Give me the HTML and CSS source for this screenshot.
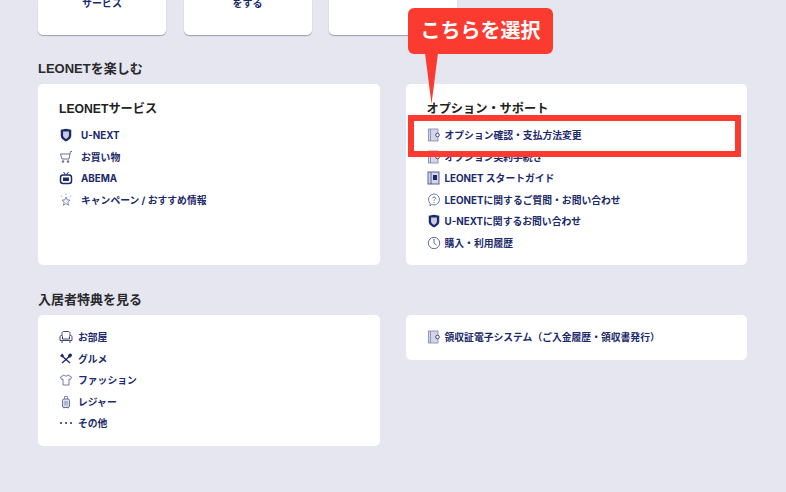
FILE: index.html
```html
<!DOCTYPE html>
<html lang="ja">
<head>
<meta charset="utf-8">
<title>LEONET</title>
<link rel="stylesheet" href="styles.css">
</head>
<body>
<svg class="defs" width="0" height="0" aria-hidden="true">
  <symbol id="i-shield" viewBox="0 0 12 12"><path d="M1.500 1.500 6 .6l4.500.9v5.200C10.500 9 8 10.700 6 11.500 4 10.700 1.500 9 1.500 6.700z" fill="#1b2a6b"/><path d="M3.500 3h5v3.500c0 1.200-1.200 2.200-2.500 2.900-1.300-.7-2.500-1.700-2.500-2.900z" fill="#c9cce0"/></symbol>
  <symbol id="i-book" viewBox="0 0 14 14"><rect x="1.500" y="1" width="9.500" height="12" fill="#d3d6e8" stroke="#7c84ad" stroke-width=".8"/><path d="M3.500 1v12" stroke="#7c84ad" stroke-width=".8"/><circle cx="10.500" cy="7" r="1.800" fill="#fff" stroke="#3d4880"/></symbol>
</svg>

<div class="page">
  <div class="top-row">
    <div class="top-card"><span class="top-label">サービス</span></div>
    <div class="top-card"><span class="top-label">をする</span></div>
    <div class="top-card"></div>
  </div>

  <h2 class="section-title first">LEONETを楽しむ</h2>
  <div class="columns">
    <section class="card tall">
      <h3 class="card-title">LEONETサービス</h3>
      <ul class="links wide">
        <li><svg class="ico"><use href="#i-shield"/></svg>U-NEXT</li>
        <li><svg class="ico" viewBox="0 0 14 14"><path d="M13 1.500h-1.500L10 9H3L1.500 4H11" fill="none" stroke="#67709f"/><circle cx="4" cy="11.500" r="1.200" fill="#67709f"/><circle cx="9" cy="11.500" r="1.200" fill="#67709f"/></svg>お買い物</li>
        <li><svg class="ico" viewBox="0 0 14 14"><rect x="1.500" y="4" width="11" height="8.500" rx="2.500" fill="none" stroke="#1b2a6b" stroke-width="1.500"/><rect x="4" y="6.500" width="6" height="3.500" fill="#1b2a6b"/><path d="M4.500 1l2 2.500M9.500 1l-2 2.500" stroke="#1b2a6b"/></svg>ABEMA</li>
        <li><svg class="ico" viewBox="0 0 14 14"><path d="M7 4l1.200 3H11L8.800 9l.8 3.200L7 10.500l-2.600 1.700.8-3.200L3 7h2.800z" fill="none" stroke="#67709f" stroke-width=".8"/><path d="M7 .5v2M2 2.500l1.200 1.500M12 2.500 10.800 4" stroke="#9aa0c0" stroke-width=".8"/></svg>キャンペーン / おすすめ情報</li>
      </ul>
    </section>
    <section class="card tall">
      <h3 class="card-title">オプション・サポート</h3>
      <ul class="links">
        <li><svg class="ico"><use href="#i-book"/></svg>オプション確認・支払方法変更</li>
        <li><svg class="ico"><use href="#i-book"/></svg>オプション契約手続き</li>
        <li><svg class="ico" viewBox="0 0 14 14"><rect x="1" y="1" width="11" height="12" fill="#d3d6e8" stroke="#56608f"/><path d="M4 1v12" stroke="#56608f"/><rect x="6" y="4" width="4" height="5" fill="#1b2a6b"/></svg>LEONET スタートガイド</li>
        <li><svg class="ico" viewBox="0 0 14 14"><path d="M7 1a5.500 5.500 0 1 1-2.500 10.400L3 13l.2-2.500A5.500 5.500 0 0 1 7 1z" fill="none" stroke="#67709f" stroke-width=".9"/><path d="M5.500 5.200C5.700 3.600 8.500 3.700 8.500 5.300 8.500 6.500 7 6.500 7 7.800M7 9v1" fill="none" stroke="#67709f"/></svg>LEONETに関するご質問・お問い合わせ</li>
        <li><svg class="ico"><use href="#i-shield"/></svg>U-NEXTに関するお問い合わせ</li>
        <li><svg class="ico" viewBox="0 0 14 14"><circle cx="7" cy="7" r="5.700" fill="none" stroke="#67709f"/><path d="M7 3v4.200l2.500 1.800" fill="none" stroke="#67709f"/></svg>購入・利用履歴</li>
      </ul>
    </section>
  </div>

  <h2 class="section-title second">入居者特典を見る</h2>
  <div class="columns">
    <section class="card short">
      <ul class="links">
        <li><svg class="ico" viewBox="0 0 14 14"><path d="M3 6V3.500C3 2 4 1.500 5 1.500h4c1 0 2 .5 2 2V6M1 7c0-2 2.500-2 2.500 0v2h7V7c0-2 2.500-2 2.500 0v3.500H1zM3 10.500V13M11 10.500V13" fill="none" stroke="#3d4880"/></svg>お部屋</li>
        <li><svg class="ico" viewBox="0 0 14 14"><path d="M2 3l9 8M12 3 3 11" stroke="#1b2a6b" stroke-width="1.300"/><ellipse cx="11" cy="3.500" rx="1.700" ry="2.200" fill="#1b2a6b" transform="rotate(45 11 3.500)"/><path d="M1 4l2.500-2.500L5 4 3.500 5.500z" fill="#1b2a6b"/></svg>グルメ</li>
        <li><svg class="ico" viewBox="0 0 14 14"><path d="M5 2 1.500 4 2.500 6.500 4 6v6h6V6l1.500.5 1-2.500L9 2C8.500 3.500 5.500 3.500 5 2z" fill="none" stroke="#67709f" stroke-width=".9"/></svg>ファッション</li>
        <li><svg class="ico" viewBox="0 0 14 14"><rect x="3.500" y="4" width="7" height="8.500" rx="1.500" fill="#dcdfec" stroke="#67709f"/><path d="M5.500 4V1.500h3V4M6 6v4.500M8 6v4.500M5 12.500v1M9 12.500v1" fill="none" stroke="#67709f" stroke-width=".8"/></svg>レジャー</li>
        <li><svg class="ico" viewBox="0 0 14 14"><circle cx="2" cy="7" r="1" fill="#1b2a6b"/><circle cx="7" cy="7" r="1" fill="#1b2a6b"/><circle cx="12" cy="7" r="1" fill="#1b2a6b"/></svg>その他</li>
      </ul>
    </section>
    <section class="card mini">
      <ul class="links">
        <li><svg class="ico"><use href="#i-book"/></svg>領収証電子システム（ご入金履歴・領収書発行）</li>
      </ul>
    </section>
  </div>
</div>

<div class="callout">こちらを選択</div>
<svg class="callout-tail" viewBox="0 0 14 52" width="14" height="52" aria-hidden="true"><path d="M0 0h13L6.500 51z" fill="#fb3b30"/></svg>
<div class="highlight"></div>
</body>
</html>
```
FILE: styles.css
```css
* { box-sizing: border-box; }
html, body { margin: 0; height: 100%; }
body {
  background: #e6e6f0;
  font-family: "Liberation Sans", "Noto Sans CJK JP", sans-serif;
  color: #222;
  position: relative;
  overflow: hidden;
}
.defs { position: absolute; }
.page { padding: 0 39px 0 38px; }
.top-row { display: flex; gap: 17.500px; }
.top-card {
  width: 128px;
  height: 35px;
  background: #fff;
  border-radius: 0 0 5px 5px;
  box-shadow: 0 1px 1px #9c9ca8;
  text-align: center;
}
.top-label {
  display: block;
  padding-top: 0;
  font-size: 10px;
  line-height: 7px;
  font-weight: 700;
  color: #1b2a6b;
}
.section-title {
  margin: 0;
  font-size: 13px;
  line-height: 18px;
  font-weight: 700;
  color: #2a2a2e;
}
.section-title.first { margin-top: 25px; margin-bottom: 6px; }
.section-title.second { margin-top: 26px; margin-bottom: 6px; }
.columns { display: flex; gap: 26px; align-items: flex-start; }
.card {
  flex: 1 1 0;
  background: #fff;
  border-radius: 5px;
  padding: 0 20px 0 21px;
}
.card.tall { height: 181px; padding-top: 16px; }
.card.short { height: 131px; padding-top: 11.500px; }
.card.mini { height: 45px; padding-top: 11.500px; }
.card-title {
  margin: 0 0 6.500px;
  font-size: 12.200px;
  line-height: 18px;
  font-weight: 700;
  color: #222;
}
.links { list-style: none; margin: 0; padding: 0; }
.links li {
  display: flex;
  align-items: center;
  gap: 4px;
  height: 21.500px;
  font-family: "Inter", "Noto Sans CJK JP", sans-serif;
  font-size: 9.800px;
  font-weight: 700;
  color: #1b2a6b;
  white-space: nowrap;
}
.links.wide li { gap: 8px; }
.card.short li { gap: 5px; }
.ico { width: 14px; height: 14px; flex: none; }
.callout {
  position: absolute;
  left: 408px;
  top: 8px;
  width: 145px;
  height: 46px;
  background: #fb3b30;
  color: #fff;
  border-radius: 6px;
  font-size: 20px;
  font-weight: 700;
  line-height: 46px;
  text-align: center;
}
.callout-tail { position: absolute; left: 425px; top: 53px; }
.highlight {
  position: absolute;
  left: 408px;
  top: 115px;
  width: 333px;
  height: 42px;
  border: 6px solid #fb3b30;
}
```
